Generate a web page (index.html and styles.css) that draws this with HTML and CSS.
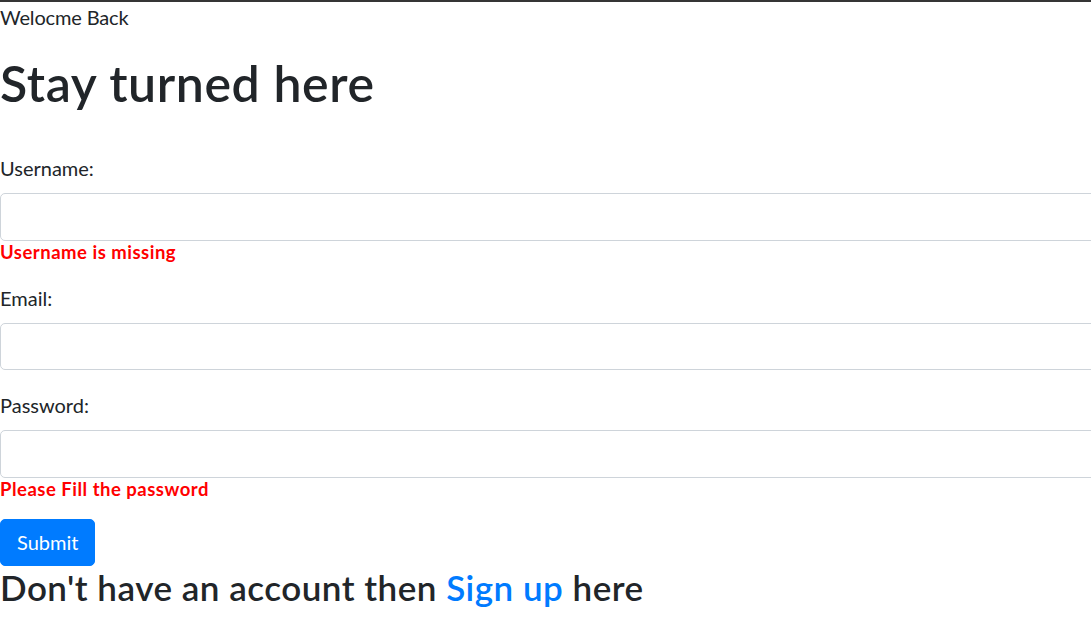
FILE: index.html
```html
<!DOCTYPE html>
<html lang="en">
<head>
<meta charset="utf-8">
<title>Login</title>
<link rel="stylesheet" href="styles.css">
</head>
<body>
<div class="topbar"></div>
<main class="page">
  <p class="welcome">Welocme Back</p>
  <h1 class="title">Stay turned here</h1>
  <form class="form">
    <div class="group">
      <label class="label" for="username">Username:</label>
      <input class="control" id="username" type="text">
      <div class="error">Username is missing</div>
    </div>
    <div class="group">
      <label class="label" for="email">Email:</label>
      <input class="control" id="email" type="email">
    </div>
    <div class="group">
      <label class="label" for="password">Password:</label>
      <input class="control" id="password" type="password">
      <div class="error">Please Fill the password</div>
    </div>
    <button class="btn" type="button">Submit</button>
  </form>
  <h3 class="signup">Don't have an account then <a class="link" href="#">Sign up</a> here</h3>
</main>
</body>
</html>
```
FILE: styles.css
```css
html, body {
  margin: 0;
  padding: 0;
  background: #ffffff;
}
body {
  font-family: "Lato", "Liberation Sans", sans-serif;
  font-size: 20px;
  line-height: 30px;
  color: #212529;
  overflow: hidden;
}
.topbar {
  height: 2px;
  background: #353535;
}
.page {
  display: flex;
  flex-direction: column;
  align-items: flex-start;
  overflow: hidden;
}
.welcome {
  margin: 0 0 19px 0;
  font-size: 20px;
  line-height: 30px;
  letter-spacing: -0.15px;
}
.title {
  margin: 0 0 42px 0;
  padding-top: 2px;
  height: 58px;
  font-size: 50px;
  line-height: 60px;
  font-weight: 600;
  letter-spacing: 0.6px;
}
.form {
  display: flex;
  flex-direction: column;
  align-items: flex-start;
  width: 100%;
}
.group {
  display: flex;
  flex-direction: column;
  align-items: flex-start;
  width: 100%;
  margin-bottom: 20px;
}
.label {
  font-size: 20px;
  line-height: 30px;
  margin-bottom: 10px;
}
.control {
  box-sizing: border-box;
  width: calc(100% + 40px);
  height: 47.5px;
  margin: 0;
  padding: 7.5px 15px;
  border: 1px solid #ced4da;
  border-radius: 5px;
  background: #fff;
  font-family: inherit;
  font-size: 20px;
}
.error {
  color: #ff0000;
  font-weight: 700;
  font-size: 18.5px;
  line-height: 22px;
  letter-spacing: 0.5px;
}
.group:last-of-type {
  margin-bottom: 19px;
}
.btn {
  box-sizing: border-box;
  height: 47.5px;
  padding: 0 16px;
  border: 1px solid #007bff;
  border-radius: 5px;
  background: #007bff;
  color: #fff;
  font-family: inherit;
  font-size: 20px;
  line-height: 30px;
}
.signup {
  margin: 0;
  font-size: 35px;
  line-height: 42px;
  font-weight: 600;
  letter-spacing: 0.5px;
}
.link {
  color: #007bff;
  text-decoration: none;
}
```
